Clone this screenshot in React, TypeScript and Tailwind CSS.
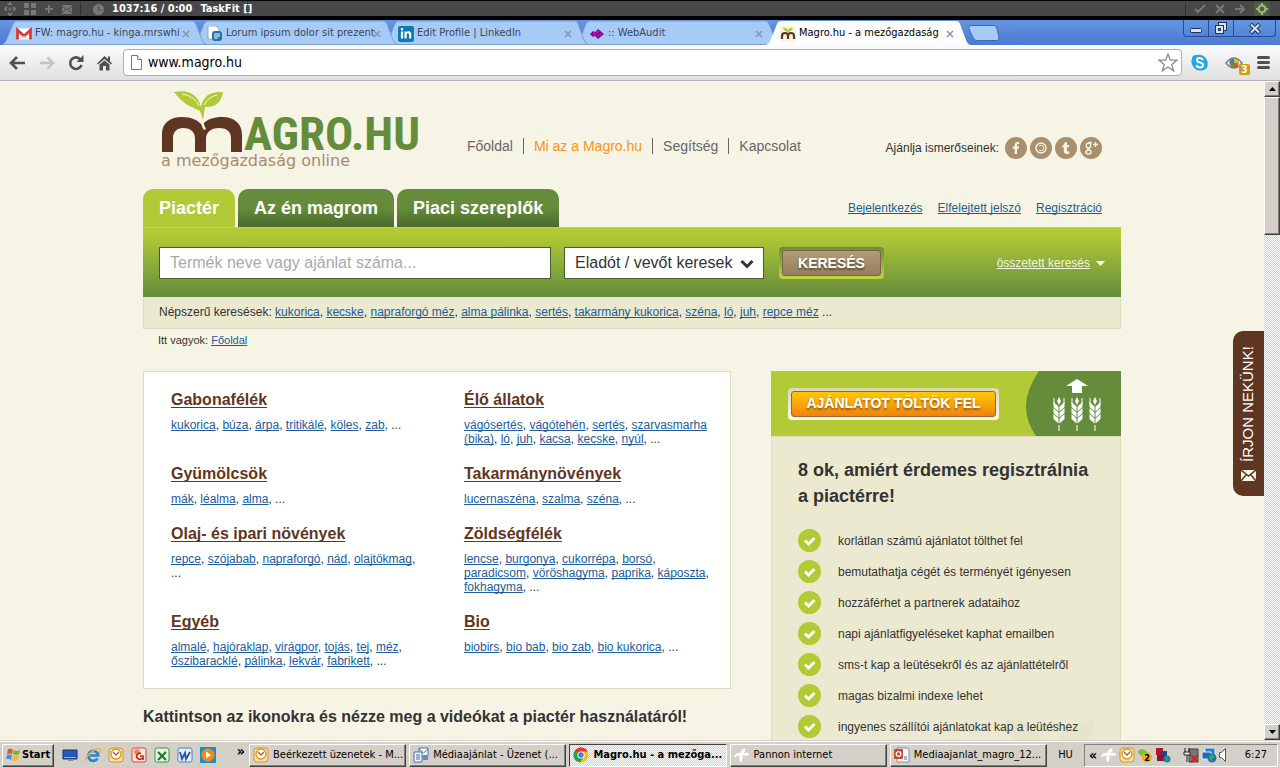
import type { ReactNode } from 'react';
import { clsx } from 'clsx';
import { FaFacebookF, FaLinkedinIn, FaTumblr } from 'react-icons/fa';

const browserTabs = [
  { icon: 'gmail', label: 'FW: magro.hu - kinga.mrswhi', active: false },
  { icon: 'doc', label: 'Lorum ipsum dolor sit prezent', active: false },
  { icon: 'linkedin', label: 'Edit Profile | LinkedIn', active: false },
  { icon: 'audit', label: ':: WebAudit', active: false },
  { icon: 'magro', label: 'Magro.hu - a mezőgazdaság', active: true },
];

const popular = ['kukorica', 'kecske', 'napraforgó méz', 'alma pálinka', 'sertés', 'takarmány kukorica', 'széna', 'ló', 'juh', 'repce méz'];

const categories = [
  { title: 'Gabonafélék', links: ['kukorica', 'búza', 'árpa', 'tritikálé', 'köles', 'zab'] },
  { title: 'Élő állatok', links: ['vágósertés', 'vágótehén', 'sertés', 'szarvasmarha (bika)', 'ló', 'juh', 'kacsa', 'kecske', 'nyúl'] },
  { title: 'Gyümölcsök', links: ['mák', 'léalma', 'alma'] },
  { title: 'Takarmánynövények', links: ['lucernaszéna', 'szalma', 'széna'] },
  { title: 'Olaj- és ipari növények', links: ['repce', 'szójabab', 'napraforgó', 'nád', 'olajtökmag'] },
  { title: 'Zöldségfélék', links: ['lencse', 'burgonya', 'cukorrépa', 'borsó', 'paradicsom', 'vöröshagyma', 'paprika', 'káposzta', 'fokhagyma'] },
  { title: 'Egyéb', links: ['almalé', 'hajóraklap', 'virágpor', 'tojás', 'tej', 'méz', 'őszibaracklé', 'pálinka', 'lekvár', 'fabrikett'] },
  { title: 'Bio', links: ['biobirs', 'bio bab', 'bio zab', 'bio kukorica'] },
];

const reasons = [
  'korlátlan számú ajánlatot tölthet fel',
  'bemutathatja cégét és terményét igényesen',
  'hozzáférhet a partnerek adataihoz',
  'napi ajánlatfigyeléseket kaphat emailben',
  'sms-t kap a leütésekről és az ajánlattételről',
  'magas bizalmi indexe lehet',
  'ingyenes szállítói ajánlatokat kap a leütéshez',
];

const tasks = [
  { icon: 'outlook', label: 'Beérkezett üzenetek - M...', active: false },
  { icon: 'mail', label: 'Médiaajánlat - Üzenet (...', active: false },
  { icon: 'chrome', label: 'Magro.hu - a mezőga...', active: true },
  { icon: 'pannon', label: 'Pannon internet', active: false },
  { icon: 'pptfile', label: 'Mediaajanlat_magro_12...', active: false },
];

const dither = 'bg-[repeating-conic-gradient(#ffffff_0_25%,#d4d0c8_0_50%)] bg-[length:2px_2px]';
const raised = 'border border-t-white border-l-white border-r-[#404040] border-b-[#404040] shadow-[inset_-1px_-1px_0_#808080]';
const linkStyle = 'text-[#205c9a] underline underline-offset-1 [text-decoration-skip-ink:none]';

function Glyph({ name }: { name: string }) {
  return (
    <svg className="size-4 shrink-0" viewBox="0 0 16 16" aria-hidden="true">
      {glyphs[name]}
    </svg>
  );
}

const glyphs: Record<string, ReactNode> = {
  gmail: (
    <>
      <rect x="0" y="2.500" width="16" height="11" rx="1" fill="#fff" />
      <path d="M1.500 13.500V4l6.500 6 6.500-6v9.500" fill="none" stroke="#d93a2f" strokeWidth="2.800" />
      <path d="M4 13l4-3 4 3" fill="none" stroke="#e6c9c6" />
    </>
  ),
  doc: (
    <>
      <path d="M1 0h8l3 3v10H1z" fill="#fff" stroke="#8b9aa8" strokeWidth=".8" />
      <rect x="5" y="5" width="10" height="10" rx="3" fill="#2373a8" />
      <path d="M7 8h6M7 10h6M7 12h4" stroke="#fff" />
    </>
  ),
  linkedin: <rect width="16" height="16" rx="2" fill="#0c7cb0" />,
  audit: (
    <>
      <path d="M1 8l3-3 2 1 3-3 6 5-6 5-3-3-2 1z" fill="#8b008b" />
      <path d="M4 8l4-3M5 10l5-5M8 11l5-4" stroke="#d05fd0" strokeDasharray="1 1" />
    </>
  ),
  magro: (
    <>
      <rect width="16" height="16" fill="#f6f4e2" />
      <path d="M2 13V10q0-3 3-3t3 3v3M8 10q0-3 3-3t3 3v3" fill="none" stroke="#5f3621" strokeWidth="2.200" />
      <path d="M3 2q4-1 5 3 1-4 5-3-1 3-5 4-4-1-5-4" fill="#b1ca35" />
    </>
  ),
  desktop: (
    <>
      <path d="M1 3h14v9H1z" fill="#2459b5" stroke="#16366e" />
      <path d="M2 10h12v1H2z" fill="#8eb4ef" />
      <path d="M6 12h5v2H6z" fill="#8a8a8a" />
    </>
  ),
  ie: (
    <>
      <path d="M12.500 11.500a5 5 0 1 1 .7-3H5" fill="none" stroke="#1f86d8" strokeWidth="2.600" />
      <path d="M1 14C-1 11 8 1 15 2q1 2-1 4" fill="none" stroke="#f3b720" strokeWidth="1.500" />
    </>
  ),
  outlook: (
    <>
      <rect x="1" y="1" width="14" height="14" rx="3" fill="#fbe0a0" stroke="#d79628" />
      <circle cx="8" cy="7" r="5" fill="#fff" stroke="#d79628" strokeWidth="1.300" />
      <path d="M5 5l3 3 3-3" fill="none" stroke="#9b6914" strokeWidth="1.300" />
    </>
  ),
  ppt: (
    <>
      <rect x="1" y="1" width="14" height="14" rx="2" fill="#fbe8e2" stroke="#d4492a" />
      <circle cx="6" cy="5" r="3" fill="#f08a68" />
      <path d="M10 6.500a3 3 0 1 0 1 4.500M9 9h3v4" fill="none" stroke="#c22f14" strokeWidth="1.700" />
    </>
  ),
  excel: (
    <>
      <rect x="1" y="1" width="14" height="14" rx="2" fill="#e3f4dd" stroke="#3e9446" />
      <path d="M4 5l8 8M12 5l-8 8" stroke="#227a2e" strokeWidth="2.200" />
    </>
  ),
  word: (
    <>
      <rect x="1" y="1" width="14" height="14" rx="2" fill="#e6effc" stroke="#4f7fcc" />
      <path d="M3 5l2 7 3-6 1 6 4-7" fill="none" stroke="#2355a8" strokeWidth="1.800" />
    </>
  ),
  media: (
    <>
      <rect width="16" height="16" fill="#1d8fc4" />
      <circle cx="8" cy="8" r="6.500" fill="#f58a16" />
      <path d="M6 4.500l5 3.500-5 3.500z" fill="#fff" />
    </>
  ),
  mail: (
    <>
      <path d="M6 1h9v8H6z" fill="#fff" stroke="#49719f" />
      <path d="M6 2l4.500 4L15 2" fill="none" stroke="#49719f" />
      <path d="M1 5h8v10H1z" fill="#eef4fb" stroke="#49719f" />
      <path d="M3 8h4M3 10h4M3 12h4" stroke="#49719f" />
      <rect x="10" y="8" width="5" height="5" fill="#5b8fca" />
    </>
  ),
  chrome: (
    <>
      <circle cx="8" cy="8" r="7.500" fill="#fbc116" />
      <path d="M8 8L1.500 4.200A7.500 7.500 0 0 1 14.600 4.500H8z" fill="#dd3c2e" />
      <path d="M8 8L1.500 4.200A7.500 7.500 0 0 0 7.200 15.500L11 9z" fill="#2f9e49" />
      <circle cx="8" cy="8" r="3.600" fill="#fff" />
      <circle cx="8" cy="8" r="2.700" fill="#3f7fe0" />
    </>
  ),
  pannon: (
    <path
      d="M7 6q1-5 4-4 1 2-3 5 5-2 7 0 0 2-7 1 1 4-1 7-2 0-1-7-3 0-6 2 1-4 6-4"
      fill="#fff"
      stroke="#fff"
      strokeWidth=".7"
    />
  ),
  pptfile: (
    <>
      <path d="M3 1h10l2 2v12H3z" fill="#fff" stroke="#7a8db0" />
      <rect x="0" y="2" width="9" height="10" rx="1" fill="#d04a2a" />
      <circle cx="4.500" cy="7" r="2.300" fill="none" stroke="#fff" strokeWidth="1.300" />
      <path d="M10 10h3M10 12h3" stroke="#4673b8" />
    </>
  ),
  messenger: (
    <>
      <path d="M1 4q4-4 8 0 6 3 4 9-6 1-8-4-4-1-4-5" fill="#7cc242" />
      <circle cx="10" cy="10.500" r="5" fill="#f6a81c" />
    </>
  ),
  cubes: (
    <>
      <rect x="1" y="1" width="7" height="7" fill="#b8142c" />
      <rect x="6" y="4" width="6" height="6" fill="#26408c" />
      <rect x="2" y="8" width="7" height="6" fill="#8c1226" />
      <circle cx="12" cy="12" r="3.500" fill="#227ac0" />
      <path d="M10 11l2-2 2 3-2 2z" fill="#2fa43a" />
    </>
  ),
  plug: (
    <>
      <path d="M6 2h9v13H6z" fill="#777" stroke="#444" />
      <path d="M2 1v4M6 1v4M1 5h6v3H1zM4 8v7" fill="#eee" stroke="#222" />
      <path d="M8 8l7 7M15 8l-7 7" stroke="#e01b1b" strokeWidth="2.200" />
    </>
  ),
  network: (
    <>
      <path d="M4 1h10v7H4z" fill="#2b7fd0" stroke="#d8e6f5" />
      <path d="M1 5h9v7H1z" fill="#2268b8" stroke="#e7eef7" />
      <circle cx="11" cy="11" r="4.500" fill="#1e6fc0" />
      <path d="M8 10l3-3 3 3-3 1 1 4-3-2z" fill="#36b04a" />
    </>
  ),
};

function TaskFitBar() {
  return (
    <div className="flex h-5 shrink-0 items-center border-t border-b-4 border-black bg-[#484848] pt-px text-white">
      <div className="flex items-center gap-2 pl-1 text-[#777]">
        <svg width="12" height="14" viewBox="0 0 12 14" fill="none" stroke="currentColor" strokeWidth="2">
          <path d="M4 3L6 1l2 2M4 11l2 2 2-2M3 5L1 7l2 2M9 5l2 2-2 2" />
          <path d="M4 7h4M6 5v4" strokeWidth="1" />
        </svg>
        <svg width="12" height="12" viewBox="0 0 12 12" fill="currentColor">
          <path d="M0 0h5v5H0zM7 0h5v5H7zM0 7h5v5H0zM7 7h5v5H7z" />
        </svg>
        <svg width="10" height="10" viewBox="0 0 10 10" fill="currentColor">
          <path d="M4 1h2v3h3v2H6v3H4V6H1V4h3z" />
        </svg>
        <svg width="10" height="10" viewBox="0 0 10 10">
          <rect width="10" height="9" y="1" fill="currentColor" />
          <path d="M0 2l5 4 5-4M0 9l3-3M10 9L7 6" fill="none" stroke="#484848" />
        </svg>
        <span className="h-3 w-px bg-[#2f2f2f]" />
        <svg className="ml-1" width="11" height="11" viewBox="0 0 11 11">
          <circle cx="5.500" cy="5.500" r="5.500" fill="currentColor" />
          <path d="M5.500 2v4h3" fill="none" stroke="#484848" />
        </svg>
      </div>
      <span className="pl-2 text-[11px] font-bold">1037:16 / 0:00</span>
      <span className="pl-2 text-[11px] font-bold">TaskFit []</span>
      <div className="ml-auto flex items-center gap-2 pr-[10px] text-[#777]">
        <span className="h-3 w-px bg-[#2f2f2f]" />
        <svg width="12" height="10" viewBox="0 0 12 10" fill="none" stroke="currentColor" strokeWidth="2">
          <path d="M1 5l3 3 7-7" />
        </svg>
        <svg width="12" height="10" viewBox="0 0 12 10" fill="none" stroke="currentColor" strokeWidth="2">
          <path d="M2 1l8 8M10 1L2 9" />
        </svg>
        <svg width="12" height="10" viewBox="0 0 12 10" fill="none" stroke="currentColor" strokeWidth="2">
          <path d="M1 5h9M6 1l4 4-4 4" />
        </svg>
        <span className="flex h-[14px] w-4 items-center justify-center bg-[#4f5a45]">
          <svg width="12" height="12" viewBox="0 0 12 12" fill="none" stroke="#9caf7c">
            <circle cx="6" cy="6" r="3.500" strokeWidth="2.500" />
            <path d="M6 0v2M6 10v2M0 6h2M10 6h2" strokeWidth="2" />
          </svg>
        </span>
      </div>
    </div>
  );
}

const tabZ = ['z-[4]', 'z-[3]', 'z-[2]', 'z-[1]', 'z-[5]'];

function TabStrip() {
  return (
    <div className="flex h-[25px] shrink-0 bg-linear-to-b from-[#6695e0] to-[#4a7ad0] pl-[2px]">
      {browserTabs.map(({ icon, label, active }, i) => (
        <div key={label} className={clsx('relative flex h-[25px] w-[191px] items-center pt-[2px] pl-[14px]', tabZ[i])}>
          <svg className="absolute top-0 left-0 overflow-visible" width="205" height="25" viewBox="0 0 205 25">
            <path
              d={active ? 'M0 25Q3 24 5 19L11 4Q12 1 15 1H190Q193 1 194 4L200 20Q202 25 205 25Z' : 'M0 24.500Q3 24 5 19L11 4Q12 1 15 1H190Q193 1 194 4L200 20Q202 24.500 205 24.500Z'}
              fill={active ? '#fdfdfd' : '#a6cbf7'}
              stroke={active ? 'none' : '#7f9fcd'}
            />
          </svg>
          <span className="relative flex">
            <Glyph name={icon} />
            {icon === 'linkedin' && <FaLinkedinIn className="absolute top-[2px] left-[2px] size-3 text-white" />}
          </span>
          <span
            className={clsx(
              'relative ml-[3px] w-[145px] text-[11px] whitespace-nowrap',
              active ? 'text-black' : 'text-[#3c4657]',
            )}
          >
            {label}
          </span>
          <button className="relative ml-[2px] shrink-0 text-[#8496b2]" aria-label={`Close ${label}`}>
            <svg width="8" height="8" viewBox="0 0 8 8" stroke="currentColor" strokeWidth="1.500">
              <path d="M1 1l6 6M7 1L1 7" />
            </svg>
          </button>
        </div>
      ))}
      <button className="ml-[11px] self-start pt-[5px]" aria-label="New tab">
        <svg width="32" height="17" viewBox="0 0 32 17">
          <path d="M3 .5h23q2 0 3 3l2 9q.5 3-2 3H9q-3 0-4-3L1 4Q0 .5 3 .5z" fill="#a6cbf7" stroke="#3f68b4" />
        </svg>
      </button>
      <div className="mr-1 ml-auto flex h-[17px] rounded-b-sm border border-t-0 border-[#274a94] text-[#d6e4fa]">
        <button className="flex w-[25px] items-center justify-center border-r border-[#274a94]" aria-label="Minimize">
          <svg width="12" height="10" viewBox="0 0 12 10">
            <rect x=".5" y="5.500" width="11" height="4" rx="1" fill="currentColor" stroke="#20315c" />
          </svg>
        </button>
        <button className="flex w-[25px] items-center justify-center border-r border-[#274a94]" aria-label="Restore">
          <svg width="14" height="13" viewBox="0 0 14 13" fill="currentColor" stroke="#20315c">
            <rect x="4.500" y=".5" width="8" height="8" />
            <rect x="1.500" y="3.500" width="8" height="8" />
            <rect x="4.500" y="6.500" width="2" height="2" fill="#5a88d8" />
          </svg>
        </button>
        <button className="flex w-[41px] items-center justify-center" aria-label="Close window">
          <svg width="12" height="11" viewBox="0 0 12 11">
            <path d="M1.500 1l9 9M10.500 1l-9 9" stroke="#20315c" strokeWidth="4" />
            <path d="M2 1.500l8 8M10 1.500l-8 8" stroke="currentColor" strokeWidth="2" />
          </svg>
        </button>
      </div>
    </div>
  );
}

function Toolbar() {
  return (
    <div className="flex h-9 shrink-0 items-center border-b border-[#b2b4bc] bg-linear-to-b from-[#fbfbfb] to-[#e0e0e0] pr-[10px] pl-[9px] text-[#505050]">
      <button className="mr-[13px]" aria-label="Back">
        <svg width="17" height="14" viewBox="0 0 17 14" fill="none" stroke="currentColor" strokeWidth="2.600">
          <path d="M16 7H3M8 1L2 7l6 6" />
        </svg>
      </button>
      <button className="mr-[13px] text-[#c4c4c4]" aria-label="Forward">
        <svg width="16" height="14" viewBox="0 0 17 14" fill="none" stroke="currentColor" strokeWidth="2.600">
          <path d="M1 7h13M9 1l6 6-6 6" />
        </svg>
      </button>
      <button className="mr-[13px]" aria-label="Reload">
        <svg width="16" height="16" viewBox="0 0 16 16">
          <path d="M12.500 4.500A5.800 5.800 0 1 0 13.500 10" fill="none" stroke="currentColor" strokeWidth="2.600" />
          <path d="M15.500 0v7H8.500z" fill="currentColor" />
        </svg>
      </button>
      <button className="mr-[11px]" aria-label="Home">
        <svg width="15" height="16" viewBox="0 0 15 16">
          <path d="M7.500 1L0 8.500l1 1L7.500 4l6.500 5.500 1-1-2-2V1.500h-2V4z" fill="currentColor" />
          <path d="M2.500 9.500L7.500 5.500l5 4V15.500H9V11H6v4.500H2.500z" fill="currentColor" />
        </svg>
      </button>
      <label className="flex h-[27px] flex-1 items-center rounded-sm border border-[#b0b0b0] bg-white pr-[3px] pl-[7px]">
        <svg width="11" height="15" viewBox="0 0 11 15" fill="#fff" stroke="#777">
          <path d="M.5.5h6l4 4v10H.5z" />
          <path d="M6.500.5v4h4" />
        </svg>
        <input
          type="text"
          aria-label="Address"
          defaultValue="www.magro.hu"
          className="min-w-0 flex-1 pl-[6px] text-[14px] text-black outline-none"
        />
        <svg width="20" height="19" viewBox="0 0 20 19" fill="#fff" stroke="#8a8a8a" strokeWidth="1.300">
          <path d="M10 1l2.300 6.200H19l-5.300 4.200 2 6.400L10 14l-5.700 3.800 2-6.400L1 7.200h6.700z" />
        </svg>
      </label>
      <button className="ml-[9px]" aria-label="Skype">
        <svg width="18" height="18" viewBox="0 0 18 18">
          <path d="M5 1q8-1 11 5 2 6-1 9-6 3-11 0-5-6-3-10 0-4 4-4" fill="#1fa8e8" />
          <path d="M12 6q-1-2-3.500-2T6 6.300q0 1.700 3 2.200t3 2.500Q12 13.500 9 13.500T5.500 11" fill="none" stroke="#fff" strokeWidth="2" />
        </svg>
      </button>
      <button className="relative mr-2 ml-4 h-[18px] w-6" aria-label="Extension">
        <svg width="18" height="14" viewBox="0 0 18 14">
          <path d="M1 7q8-10 16 0-8 10-16 0z" fill="#eee" stroke="#808080" strokeWidth="1.500" />
          <circle cx="9" cy="7" r="4.500" fill="#4a9a44" />
          <path d="M9 7V2.500A4.500 4.500 0 0 1 13.500 7z" fill="#e7b52d" />
          <path d="M9 7H4.500A4.500 4.500 0 0 1 9 2.500z" fill="#2f7fd0" />
          <path d="M9 7v4.500A4.500 4.500 0 0 0 13.500 7z" fill="#cc5a2a" />
        </svg>
        <span className="absolute -right-px -bottom-[3px] flex size-[11px] items-center justify-center rounded-[2px] bg-[#cf9d12] text-[10px] font-bold text-white">
          3
        </span>
      </button>
      <button className="flex w-[13px] flex-col gap-[2px]" aria-label="Menu">
        <span className="h-[3px] rounded bg-[#505050]" />
        <span className="h-[3px] rounded bg-[#505050]" />
        <span className="h-[3px] rounded bg-[#505050]" />
      </button>
    </div>
  );
}

function Logo() {
  return (
    <svg className="overflow-visible" width="262" height="84" viewBox="0 0 262 84" role="img" aria-label="Magro.hu">
      <path
        d="M0 63V45C0 34 8 28 20 28C29 28 36 31 40 36C45 30 52 28 60 28C73 28 80 35 80 46V63H69V49C69 42 64 39 57 39C49 39 44 43 44 50V63H33V50C33 43 29 39 21 39C15 39 11 43 11 49V63Z"
        fill="#5f3621"
      />
      <path d="M42 41Q38 36 40 30L43 26Q40 34 44 40Z" fill="#f6f4e5" />
      <path d="M12 3C26 0 36 5 39 18C41 7 48 2 61 3C59 14 54 18 43 18L41 31L38 22C28 17 22 16 12 3Z" fill="#b1ca35" />
      <path d="M20 5Q33 7 37 17M55 6Q46 8 42 16" fill="none" stroke="#f6f4e5" />
      <text x="82" y="61" fontSize="47" fontWeight="bold" fill="#658c3a" fontFamily="'Roboto Condensed', Roboto, sans-serif">
        AGRO.HU
      </text>
      <text x="-1" y="77" fontSize="16" fill="#a68d6a" fontFamily="'DejaVu Sans', sans-serif">
        a mezőgazdaság online
      </text>
    </svg>
  );
}

function Header() {
  const nav = ['Főoldal', 'Mi az a Magro.hu', 'Segítség', 'Kapcsolat'];
  const shares = [
    { label: 'Facebook', icon: <FaFacebookF className="size-3" /> },
    {
      label: 'iWiW',
      icon: (
        <svg width="12" height="12" viewBox="0 0 12 12" fill="none" stroke="currentColor" strokeWidth="1.500">
          <circle cx="6" cy="6" r="5" />
          <path d="M4 4q4-2 4.500 2T4 8" strokeWidth="1" />
        </svg>
      ),
    },
    { label: 'Twitter', icon: <FaTumblr className="size-3" /> },
    {
      label: 'Google+',
      icon: (
        <svg width="14" height="14" viewBox="0 0 14 14" fill="none" stroke="currentColor" strokeWidth="1.400">
          <ellipse cx="4.500" cy="4.500" rx="2.200" ry="2.500" />
          <path d="M8 1.500H4.500M4 7q-1 1 1 1.600T7.200 11q-.2 2-2.700 2T1.700 11Q2 9.300 5 9.300M11.500 1v5M9 3.500h5" />
        </svg>
      ),
    },
  ];
  return (
    <header className="flex h-[108px] items-start pt-[8px] pr-[19px] pl-[19px]">
      <a href="#" className="w-[295px]">
        <Logo />
      </a>
      <nav className="flex pt-[49px] text-[14px] leading-4 text-[#666]">
        {nav.map((item, i) => (
          <a
            key={item}
            href="#"
            className={clsx('px-[10px]', i > 0 && 'border-l border-[#666]', i === 1 && 'text-[#f7931e]')}
          >
            {item}
          </a>
        ))}
      </nav>
      <div className="ml-auto flex items-center gap-[3px] pt-[48px]">
        <span className="mr-[3px] text-[12px]">Ajánlja ismerőseinek:</span>
        {shares.map(({ label, icon }) => (
          <a
            key={label}
            href="#"
            aria-label={label}
            className="flex size-[22px] items-center justify-center rounded-full bg-[#a98f6b] text-[#f6f4e5]"
          >
            {icon}
          </a>
        ))}
      </div>
    </header>
  );
}

function SearchArea() {
  return (
    <>
      <div className="flex items-end gap-[3px] pr-[19px]">
        {['Piactér', 'Az én magrom', 'Piaci szereplők'].map((tab, i) => (
          <a
            key={tab}
            href="#"
            className={clsx(
              'h-[38px] rounded-t-[10px] px-4 text-[18px] leading-[38px] font-bold text-white',
              i === 0 ? 'bg-[#b1ca35]' : 'bg-linear-to-b from-[#658c3a] from-50% to-[#4a6a2c]',
            )}
          >
            {tab}
          </a>
        ))}
        <div className="ml-auto flex gap-[15px] self-center text-[12px]">
          {['Bejelentkezés', 'Elfelejtett jelszó', 'Regisztráció'].map((item) => (
            <a key={item} href="#" className={linkStyle}>
              {item}
            </a>
          ))}
        </div>
      </div>
      <form className="flex h-[70px] items-center border-t border-[#bfd250] bg-linear-to-b from-[#b1ca35] from-10% to-[#658c3a] px-4 pt-px">
        <input
          type="text"
          aria-label="Keresés"
          placeholder="Termék neve vagy ajánlat száma..."
          className="h-8 w-[392px] border border-[#46602a] bg-white px-[10px] text-[16px] placeholder:text-[#aaa]"
        />
        <div className="relative ml-[13px]">
          <select
            aria-label="Ajánlat típusa"
            className="h-8 w-[200px] appearance-none border border-[#46602a] bg-white pl-[10px] text-[16px] text-[#333]"
          >
            <option>Eladót / vevőt keresek</option>
          </select>
          <svg className="pointer-events-none absolute top-3 right-[10px]" width="14" height="10" viewBox="0 0 14 10">
            <path d="M1.500 2L7 7.500 12.500 2" fill="none" stroke="#333" strokeWidth="3" />
          </svg>
        </div>
        <span className="ml-[15px] flex h-8 w-[105px] rounded bg-linear-to-b from-[#658c3a] to-[#bfd63c] p-[3px]">
          <button
            type="button"
            className="flex-1 rounded-[3px] border border-[#7a6548] bg-linear-to-b from-[#b39b78] to-[#94805f] text-[14px] font-bold text-white [text-shadow:0_2px_2px_#5f4a30]"
          >
            KERESÉS
          </button>
        </span>
        <a href="#" className="ml-auto text-[12px] text-[#f6f4e5] underline underline-offset-1">
          összetett keresés
        </a>
        <svg className="ml-[6px]" width="9" height="5" viewBox="0 0 9 5" fill="#fff">
          <path d="M0 0h9L4.500 5z" />
        </svg>
      </form>
      <p className="h-8 border border-t-0 border-[#dddcbc] bg-[#ebe9cf] px-[15px] text-[12px] leading-[30px]">
        Népszerű keresések:{' '}
        {popular.map((item, i) => (
          <span key={item}>
            <a href="#" className={linkStyle}>{item}</a>
            {i < popular.length - 1 ? ', ' : ' ...'}
          </span>
        ))}
      </p>
      <p className="px-[15px] pt-[3px] text-[11px] leading-4">
        Itt vagyok: <a href="#" className={linkStyle}>Főoldal</a>
      </p>
    </>
  );
}

function Categories() {
  return (
    <div className="grid grid-cols-2 gap-x-10 gap-y-4 border border-[#dddcbc] bg-white pt-4 pr-[13px] pb-5 pl-[27px]">
      {categories.map(({ title, links }) => (
        <section key={title}>
          <h2 className="text-[16px] leading-6 font-bold">
            <a href="#" className="text-[#5f3621] underline underline-offset-2 [text-decoration-skip-ink:none]">{title}</a>
          </h2>
          <p className="mt-[6px] text-[12px] leading-[14px]">
            {links.map((link) => (
              <span key={link}>
                <a href="#" className={linkStyle}>{link}</a>,{' '}
              </span>
            ))}
            ...
          </p>
        </section>
      ))}
    </div>
  );
}

function WheatBadge() {
  return (
    <svg width="95" height="65" viewBox="0 0 95 65">
      <path d="M13 0H95V65H10Q0 51 0 35T13 0z" fill="#658c3a" />
      <path d="M51 8l11 7h-6v7H46v-7h-6z" fill="#fff" />
      {[33, 51, 69].map((x) => (
        <g key={x} transform={`translate(${x} 26)`} fill="#fff">
          <path d="M0 0l2 4-2 4-2-4zM-.5 28h1v6h-1z" />
          {[5, 11, 17].map((y) => (
            <path key={y} d={`M-5.500 ${y}l5 4.500v5l-5-4.500zM5.500 ${y}l-5 4.500v5l5-4.500z`} />
          ))}
          <path d="M-5 1v6M5 1v6" stroke="#fff" />
        </g>
      ))}
    </svg>
  );
}

function RegisterPanel() {
  return (
    <aside className="w-[350px]">
      <div className="flex h-[65px] items-center justify-between bg-[#b1ca35] pl-[17px]">
        <span className="flex h-8 w-[211px] rounded bg-linear-to-b from-[#d9d7b4] to-[#fbfaf3] p-[3px]">
          <button className="flex-1 rounded-[3px] border border-[#a0642a] bg-linear-to-b from-[#fdc800] to-[#f0820f] text-[14px] font-bold text-white [text-shadow:0_2px_2px_#9a5a10]">
            AJÁNLATOT TÖLTÖK FEL
          </button>
        </span>
        <WheatBadge />
      </div>
      <div className="relative border border-[#dddcbc] bg-[#ebe9cf] pt-5 pr-5 pb-10 pl-[26px]">
        <svg className="absolute top-[282px] right-6" width="92" height="60" viewBox="0 0 92 60" fill="#e6e4c9">
          <path d="M0 0q38 0 45 40Q14 42 0 0zM92 0Q52 4 48 38 84 38 92 0z" />
        </svg>
        <h2 className="relative text-[18px] leading-[26px] font-bold">8 ok, amiért érdemes regisztrálnia a piactérre!</h2>
        <ul className="relative mt-4">
          {reasons.map((reason) => (
            <li key={reason} className="flex h-[31px] items-center gap-[17px] text-[12px]">
              <svg width="23" height="23" viewBox="0 0 23 23">
                <circle cx="11.500" cy="11.500" r="11.500" fill="#b1ca35" />
                <path d="M7 11.500l3.500 3.500 6-6" fill="none" stroke="#fff" strokeWidth="3" />
              </svg>
              {reason}
            </li>
          ))}
        </ul>
      </div>
    </aside>
  );
}

function Scrollbar() {
  return (
    <div className={clsx('flex w-4 shrink-0 flex-col', dither)}>
      <button className={clsx('flex h-4 items-center justify-center bg-[#d4d0c8]', raised)} aria-label="Scroll up">
        <svg width="7" height="4" viewBox="0 0 7 4"><path d="M0 4h7L3.500 0z" /></svg>
      </button>
      <div className={clsx('h-[138px] bg-[#d4d0c8]', raised)} />
      <button className={clsx('mt-auto flex h-4 items-center justify-center bg-[#d4d0c8]', raised)} aria-label="Scroll down">
        <svg width="7" height="4" viewBox="0 0 7 4"><path d="M0 0h7L3.500 4z" /></svg>
      </button>
    </div>
  );
}

function Taskbar() {
  return (
    <footer className="flex h-7 shrink-0 items-center border-t border-[#d4d0c8] bg-[#d4d0c8] px-[2px] pt-px text-[11px] text-black shadow-[inset_0_1px_0_#fff]">
      <button className={clsx('flex h-[23px] w-[52px] items-center gap-px pl-[2px] font-bold', raised)}>
        <svg width="16" height="16" viewBox="0 0 16 16">
          <path d="M3 2q3-1 5 1L7 7Q4 6 2 7z" fill="#e8542a" />
          <path d="M9 3q3 2 6 0l-1 4q-3 2-6 0z" fill="#6cb33e" />
          <path d="M2 8q3-1 5 0l-1 5q-2-2-5-1z" fill="#3b8de0" />
          <path d="M8 8q3 2 6 0l-1 5q-3 2-6 0z" fill="#f4bb2a" />
        </svg>
        Start
      </button>
      <div className="flex gap-[7px] pl-2">
        {['desktop', 'ie', 'outlook', 'ppt', 'excel', 'word', 'media'].map((icon) => (
          <button key={icon} aria-label={icon}>
            <Glyph name={icon} />
          </button>
        ))}
      </div>
      <button className="mr-1 ml-auto self-start pt-[3px] text-[14px] leading-3 font-bold" aria-label="More">»</button>
      <div className="flex w-[798px] gap-[3px]">
        {tasks.map(({ icon, label, active }) => (
          <button
            key={label}
            className={clsx(
              'flex h-[23px] min-w-0 flex-1 items-center gap-1 pl-[3px] whitespace-nowrap',
              active
                ? ['border border-t-[#404040] border-r-white border-b-white border-l-[#404040] font-bold', dither]
                : raised,
            )}
          >
            <Glyph name={icon} />
            {label}
          </button>
        ))}
      </div>
      <span className="w-[37px] text-center">HU</span>
      <div className="flex h-[23px] w-[194px] items-center border border-t-[#808080] border-r-white border-b-white border-l-[#808080] pr-[10px] pl-1">
        <button className="mr-1 text-[14px] leading-3 font-bold" aria-label="Expand">«</button>
        <div className="flex gap-[2px]">
          <Glyph name="pannon" />
          <Glyph name="outlook" />
          <span className="relative">
            <Glyph name="messenger" />
            <span className="absolute top-[5px] left-[7px] text-[9px] leading-3 font-bold">2</span>
          </span>
          <Glyph name="cubes" />
        </div>
        <div className="ml-3 flex gap-[2px]">
          <Glyph name="plug" />
          <Glyph name="network" />
          <svg width="8" height="16" viewBox="0 0 8 16" fill="#fff" stroke="#555">
            <path d="M.5 5.500h2l4-4v13l-4-4h-2z" />
          </svg>
        </div>
        <span className="ml-auto">6:27</span>
      </div>
    </footer>
  );
}

export default function App() {
  return (
    <div className="flex h-screen flex-col overflow-hidden [font-family:'DejaVu_Sans_Condensed','DejaVu_Sans',sans-serif]">
      <TaskFitBar />
      <TabStrip />
      <Toolbar />
      <div className="relative flex min-h-0 flex-1">
        <div className="min-w-0 flex-1 overflow-hidden bg-[#f6f4e5] text-[#333] [font-family:'Liberation_Sans',Arial,sans-serif]">
          <div className="mx-auto max-w-[978px]">
            <Header />
            <SearchArea />
            <main className="flex items-start justify-between pt-[23px]">
              <div className="w-[588px]">
                <Categories />
                <h2 className="mt-4 text-[16px] leading-6 font-bold">
                  Kattintson az ikonokra és nézze meg a videókat a piactér használatáról!
                </h2>
              </div>
              <RegisterPanel />
            </main>
          </div>
        </div>
        <a
          href="#"
          className="absolute top-[250px] right-4 flex h-[165px] w-[31px] rotate-180 items-center justify-center gap-2 rounded-r-[10px] bg-[#5f3621] text-[15px] text-white [font-family:'Liberation_Sans',Arial,sans-serif] [writing-mode:vertical-rl]"
        >
          <svg className="rotate-180" width="15" height="11" viewBox="0 0 15 11">
            <rect width="15" height="11" fill="#f6f4e5" />
            <path d="M0 0l7.500 6L15 0M0 11l5-6M15 11l-5-6" fill="none" stroke="#5f3621" strokeWidth="1.500" />
          </svg>
          ÍRJON NEKÜNK!
        </a>
        <Scrollbar />
      </div>
      <Taskbar />
    </div>
  );
}
